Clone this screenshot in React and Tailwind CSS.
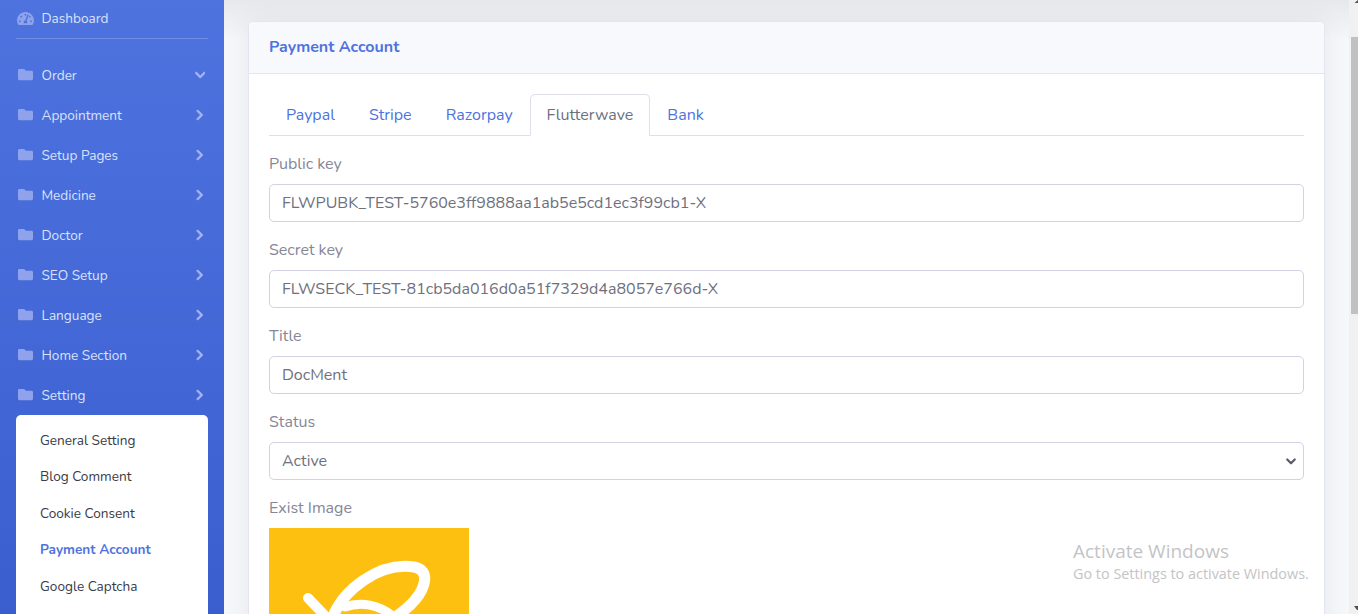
import React from "react";

function Folder() {
  return (
    <svg viewBox="0 0 512 512" className="w-[15px] h-[15px] shrink-0 ml-[2px] -mt-[1px] fill-[#8fa3ec]">
      <path d="M464 128H272l-64-64H48C21.49 64 0 85.49 0 112v288c0 26.51 21.49 48 48 48h416c26.51 0 48-21.49 48-48V176c0-26.51-21.49-48-48-48z" />
    </svg>
  );
}

function Gauge() {
  return (
    <svg viewBox="0 0 576 512" className="w-[17px] h-[15px] shrink-0 ml-[1px] fill-[#8fa3ec]">
      <path d="M288 32C128.9 32 0 160.9 0 320c0 52.8 14.3 102.3 39.1 144.8 5.6 9.6 16.3 15.2 27.4 15.2h443c11.1 0 21.8-5.6 27.4-15.2C561.8 422.3 576 372.8 576 320c0-159.100-128.900-288-288-288zm0 64c14.700 0 26.600 10.100 30.300 23.700-1.100 2.300-2.600 4.200-3.500 6.700l-9.200 27.700c-5.100 3.500-11 6-17.600 6-17.700 0-32-14.300-32-32S270.300 96 288 96zM96 384c-17.700 0-32-14.300-32-32s14.300-32 32-32 32 14.300 32 32-14.300 32-32 32zm48-160c-17.700 0-32-14.300-32-32s14.300-32 32-32 32 14.300 32 32-14.300 32-32 32zm246.800-72.400l-61.300 184C343.100 347.300 352 364.500 352 384c0 11.700-3.400 22.600-8.900 32H232.900c-5.500-9.400-8.900-20.300-8.900-32 0-33.900 26.500-61.400 59.900-63.600l61.300-184c4.200-12.600 17.700-19.500 30.400-15.200 12.600 4.200 19.400 17.800 15.200 30.400zm14.700 57.200l15.500-46.600c3.500-1.300 7.100-2.200 11-2.200 17.700 0 32 14.300 32 32s-14.300 32-32 32c-11.400 0-20.900-6.300-26.500-15.200zM480 384c-17.700 0-32-14.300-32-32s14.300-32 32-32 32 14.300 32 32-14.300 32-32 32z" />
    </svg>
  );
}

function ChevRight() {
  return (
    <svg viewBox="0 0 320 512" className="w-[7.500px] h-[12px] fill-[#a4b4f0] stroke-[#a4b4f0] stroke-[24]">
      <path d="M285.500 273L91.100 467.300c-9.400 9.400-24.600 9.400-33.900 0l-22.700-22.700c-9.400-9.400-9.400-24.500 0-33.900L188.500 256 34.500 101.300c-9.300-9.400-9.300-24.500 0-33.900l22.700-22.700c9.400-9.400 24.600-9.400 33.900 0L285.500 239c9.400 9.400 9.400 24.600 0 34z" />
    </svg>
  );
}

function ChevDown() {
  return (
    <svg viewBox="0 0 448 512" className="w-[10.500px] h-[12px] fill-[#a4b4f0] stroke-[#a4b4f0] stroke-[24]">
      <path d="M207 381.500L12.700 187.100c-9.400-9.400-9.400-24.600 0-33.900l22.700-22.700c9.400-9.400 24.500-9.400 33.900 0L224 284.500l154.700-154c9.400-9.300 24.500-9.300 33.900 0l22.700 22.700c9.400 9.400 9.400 24.600 0 33.900L241 381.500c-9.400 9.400-24.600 9.400-34 0z" />
    </svg>
  );
}

const menu = ["Order", "Appointment", "Setup Pages", "Medicine", "Doctor", "SEO Setup", "Language", "Home Section", "Setting"];
const sub = ["General Setting", "Blog Comment", "Cookie Consent", "Payment Account", "Google Captcha"];
const tabs = ["Paypal", "Stripe", "Razorpay", "Flutterwave", "Bank"];

function Field({ label, value, select }) {
  return (
    <div className="mb-4">
      <div className="h-6 leading-6 text-[#858796] mb-2">{label}</div>
      <div className="h-[38px] border border-[#d1d3e2] rounded-[5px] px-3 flex items-center justify-between text-[#6e707e]">
        <span>{value}</span>
        {select && (
          <svg viewBox="0 0 16 16" className="w-[12px] h-[12px] -mr-[6px]" fill="none" stroke="#5a5c69" strokeWidth="3" strokeLinecap="round" strokeLinejoin="round">
            <path d="M3 6l5 5 5-5" />
          </svg>
        )}
      </div>
    </div>
  );
}

export default function App() {
  return (
    <div className="h-[614px] w-[1358px] overflow-hidden flex bg-[#f8f9fc] font-['Nunito','Lato','Noto_Sans',sans-serif] text-base">
      <aside className="w-[224px] shrink-0 h-full bg-gradient-to-b from-[#4e73df] to-[#3b5ecf] px-4 text-[13.600px]">
        <div className="h-[39px] flex items-center gap-[7.500px] border-b border-[#6f8de5] pb-[2px] text-[#dbe2fa]">
          <Gauge />
          <span className="pt-[2px]">Dashboard</span>
        </div>
        <nav className="pt-4 text-[#dbe2fa]">
          {menu.map((m, i) => (
            <div key={m} className="h-10 flex items-center">
              <Folder />
              <span className="ml-[8.500px] flex-1 pt-[2px]">{m}</span>
              {i === 0 ? (
                <span className="mr-[3px] flex"><ChevDown /></span>
              ) : (
                <span className="mr-[5px] flex"><ChevRight /></span>
              )}
            </div>
          ))}
        </nav>
        <div className="bg-white rounded-[5px] pt-[7.500px] pb-8 text-[13.600px]">
          {sub.map((s) => (
            <div
              key={s}
              className={`h-[36.500px] flex items-center pl-6 ${s === "Payment Account" ? "text-[#4e73df] font-bold" : "text-[#3a3b45]"}`}
            >
              {s}
            </div>
          ))}
        </div>
      </aside>

      <main className="flex-1 h-full relative bg-gradient-to-b from-[#e7e8ec] to-[#f6f7fb] to-[40px] px-6 pt-[21px]">
        <section className="w-[1077px] bg-white border border-[#e3e6f0] rounded-[5px] shadow-[0_0_24px_rgba(58,59,69,0.08)]">
          <header className="h-[52px] bg-[#f8f9fc] border-b border-[#e3e6f0] rounded-t-[5px] px-5 pb-[2px] flex items-center">
            <h1 className="text-[#4e73df] font-bold text-base">Payment Account</h1>
          </header>
          <div className="px-5 pt-5">
            <div className="flex h-[42px] border-b border-[#dddfeb] mb-4">
              {tabs.map((t) => (
                <div
                  key={t}
                  className={
                    t === "Flutterwave"
                      ? "h-[42px] px-4 flex items-center bg-white text-[#6e707e] border border-[#dddfeb] border-b-white rounded-t-[5px]"
                      : "h-[41px] px-[17px] flex items-center text-[#4e73df]"
                  }
                >
                  {t}
                </div>
              ))}
            </div>
            <Field label="Public key" value="FLWPUBK_TEST-5760e3ff9888aa1ab5e5cd1ec3f99cb1-X" />
            <Field label="Secret key" value="FLWSECK_TEST-81cb5da016d0a51f7329d4a8057e766d-X" />
            <Field label="Title" value="DocMent" />
            <Field label="Status" value="Active" select />
            <div className="h-6 leading-6 text-[#858796] mb-2">Exist Image</div>
            <div className="w-[200px] h-[200px] bg-[#fec010] overflow-hidden">
              <svg viewBox="0 0 200 200" className="w-[200px] h-[200px]" fill="none" stroke="#fff" strokeLinecap="round">
                <path d="M39 70L62 94" strokeWidth="10" />
                <path d="M62 94C72 62 110 34 145 39C162 42 156 60 146 72C136 84 122 92 110 100" strokeWidth="11" />
                <path d="M76 79C92 73 110 77 124 88" strokeWidth="9" />
              </svg>
            </div>
          </div>
        </section>

        <div className="absolute left-[849px] top-[540px] text-[#c4c4c6] font-['Open_Sans','Noto_Sans',sans-serif]">
          <div className="text-[19px] leading-[23px]">Activate Windows</div>
          <div className="text-[14.400px] leading-[22px]">Go to Settings to activate Windows.</div>
        </div>

        <div className="absolute right-0 top-0 w-[9px] h-full bg-[#f1f1f1]">
          <div className="absolute right-0 top-[37px] w-[7px] h-[277px] bg-[#c1c1c1]" />
          <svg viewBox="0 0 4 4" className="absolute right-0 top-0 w-1 h-1 fill-[#505050]">
            <path d="M4 0V3H0.500z" />
          </svg>
          <svg viewBox="0 0 4 4" className="absolute right-0 top-[606px] w-1 h-1 fill-[#505050]">
            <path d="M0 0H4V4H3z" />
          </svg>
        </div>
      </main>
    </div>
  );
}
